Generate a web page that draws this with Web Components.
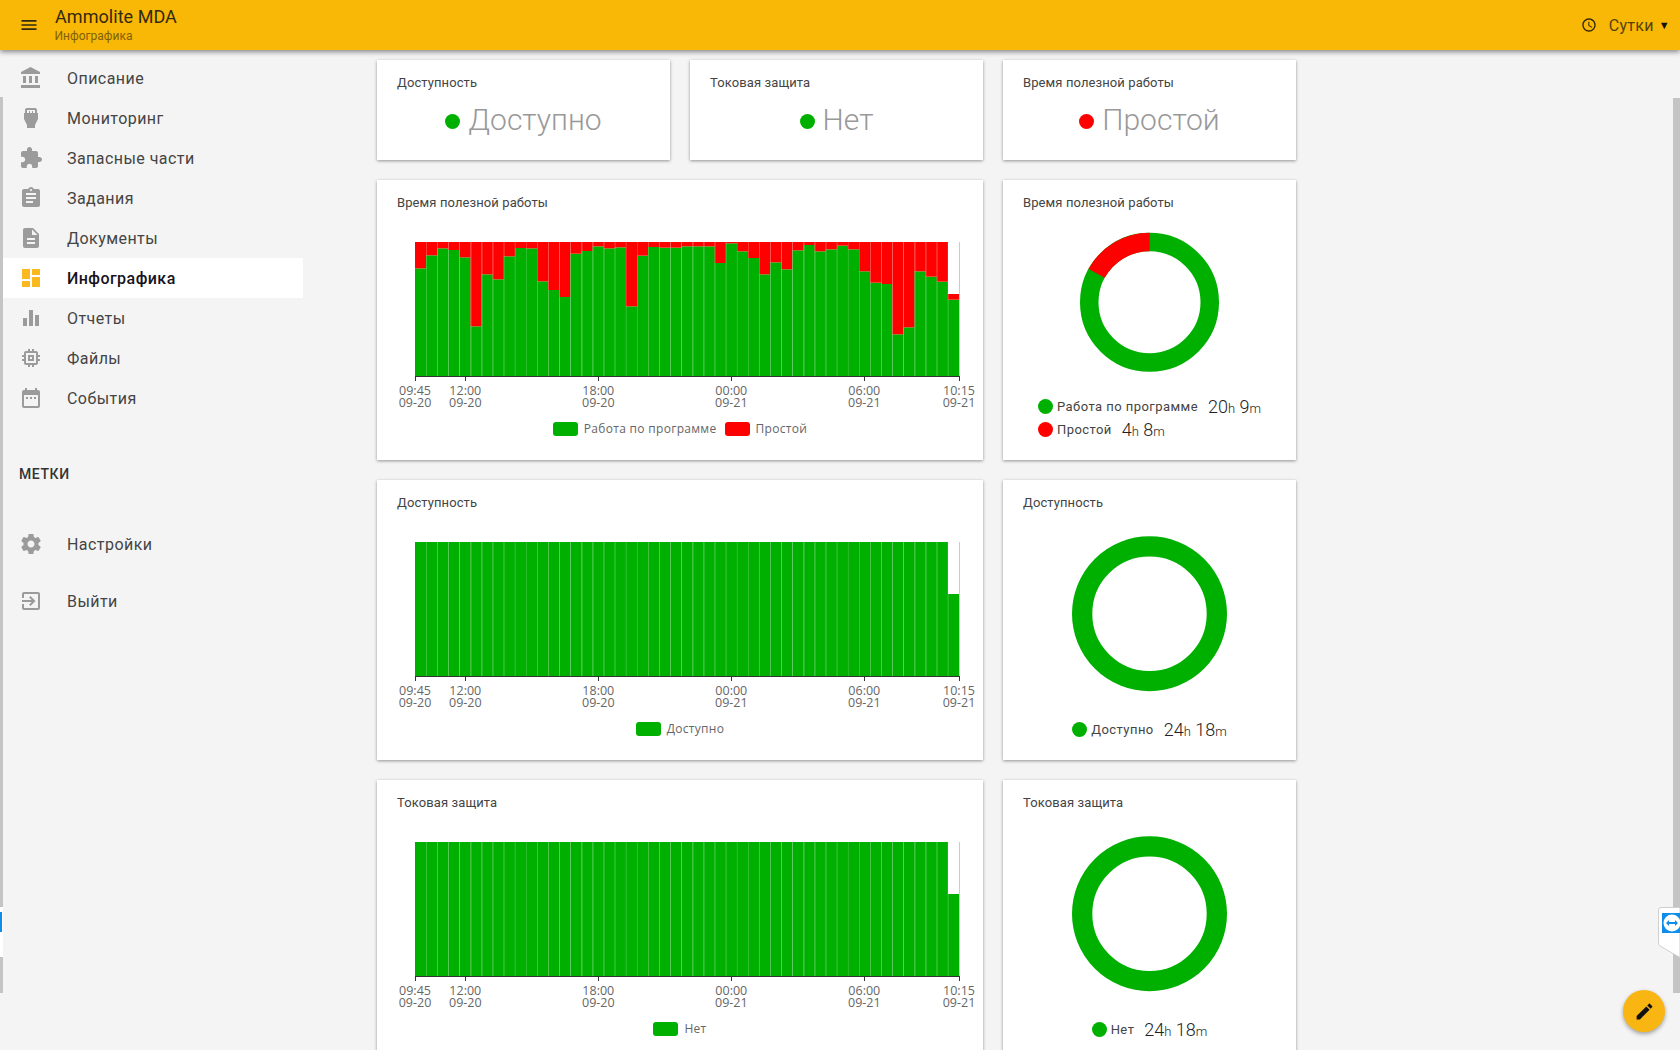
<!DOCTYPE html>
<html lang="ru">
<head>
<meta charset="utf-8">
<title>Ammolite MDA</title>
<style>
  html, body { margin: 0; height: 100%; overflow: hidden; background: #f4f4f4; font-family: Roboto, "Liberation Sans", sans-serif; }
</style>
</head>
<body>
<am-app></am-app>

<script>
const ICONS = {
  menu: 'M3 18h18v-2H3v2zm0-5h18v-2H3v2zm0-7v2h18V6H3z',
  clock: 'M11.99 2C6.47 2 2 6.48 2 12s4.47 10 9.99 10C17.52 22 22 17.52 22 12S17.52 2 11.99 2zM12 20c-4.42 0-8-3.58-8-8s3.58-8 8-8 8 3.58 8 8-3.58 8-8 8zm.5-13H11v6l5.25 3.15.75-1.23-4.5-2.67z',
  bank: 'M4 10v7h3v-7H4zm6 0v7h3v-7h-3zM2 22h19v-3H2v3zm14-12v7h3v-7h-3zm-4.5-9L2 6v2h19V6l-9.5-5z',
  hdmi: 'M18 7V4c0-1.1-.9-2-2-2H8c-1.1 0-2 .9-2 2v3H5v6l3 6v3h8v-3l3-6V7h-1zM8 4h8v3h-2.01V5h-1v2H11V5h-1v2H8V4z',
  puzzle: 'M20.5 11H19V7c0-1.1-.9-2-2-2h-4V3.5C13 2.12 11.88 1 10.5 1S8 2.12 8 3.5V5H4c-1.1 0-1.99.9-1.99 2v3.8H3.5c1.49 0 2.7 1.21 2.7 2.7s-1.21 2.7-2.7 2.7H2V20c0 1.1.9 2 2 2h3.8v-1.5c0-1.49 1.21-2.7 2.7-2.7 1.49 0 2.7 1.21 2.7 2.7V22H17c1.1 0 2-.9 2-2v-4h1.5c1.38 0 2.5-1.12 2.5-2.5S21.88 11 20.5 11z',
  assignment: 'M19 3h-4.18C14.4 1.84 13.3 1 12 1c-1.3 0-2.4.84-2.82 2H5c-1.1 0-2 .9-2 2v14c0 1.1.9 2 2 2h14c1.1 0 2-.9 2-2V5c0-1.1-.9-2-2-2zm-7 0c.55 0 1 .45 1 1s-.45 1-1 1-1-.45-1-1 .45-1 1-1zm2 14H7v-2h7v2zm3-4H7v-2h10v2zm0-4H7V7h10v2z',
  doc: 'M14 2H6c-1.1 0-1.99.9-1.99 2L4 20c0 1.1.89 2 1.99 2H18c1.1 0 2-.9 2-2V8l-6-6zm2 16H8v-2h8v2zm0-4H8v-2h8v2zm-3-5V3.5L18.5 9H13z',
  dashboard: 'M3 13h8V3H3v10zm0 8h8v-6H3v6zm10 0h8V11h-8v10zm0-18v6h8V3h-8z',
  bars: 'M10 20h4V4h-4v16zm-6 0h4v-8H4v8zM16 9v11h4V9h-4z',
  chip: 'M15 9H9v6h6V9zm-2 4h-2v-2h2v2zm8-2V9h-2V7c0-1.1-.9-2-2-2h-2V3h-2v2h-2V3H9v2H7c-1.1 0-2 .9-2 2v2H3v2h2v2H3v2h2v2c0 1.1.9 2 2 2h2v2h2v-2h2v2h2v-2h2c1.1 0 2-.9 2-2v-2h2v-2h-2v-2h2zm-4 6H7V7h10v10z',
  calendar: 'M9 11H7v2h2v-2zm4 0h-2v2h2v-2zm4 0h-2v2h2v-2zm2-7h-1V2h-2v2H8V2H6v2H5c-1.11 0-1.99.9-1.99 2L3 20c0 1.1.89 2 2 2h14c1.1 0 2-.9 2-2V6c0-1.1-.9-2-2-2zm0 16H5V9h14v11z',
  gear: 'M19.43 12.98c.04-.32.07-.64.07-.98s-.03-.66-.07-.98l2.11-1.65c.19-.15.24-.42.12-.64l-2-3.46c-.12-.22-.39-.3-.61-.22l-2.49 1c-.52-.4-1.08-.73-1.69-.98l-.38-2.65C14.46 2.18 14.25 2 14 2h-4c-.25 0-.46.18-.49.42l-.38 2.65c-.61.25-1.17.59-1.69.98l-2.49-1c-.23-.09-.49 0-.61.22l-2 3.46c-.13.22-.07.49.12.64l2.11 1.65c-.04.32-.07.65-.07.98s.03.66.07.98l-2.11 1.65c-.19.15-.24.42-.12.64l2 3.46c.12.22.39.3.61.22l2.49-1c.52.4 1.08.73 1.69.98l.38 2.65c.03.24.24.42.49.42h4c.25 0 .46-.18.49-.42l.38-2.65c.61-.25 1.17-.59 1.69-.98l2.49 1c.23.09.49 0 .61-.22l2-3.46c.12-.22.07-.49-.12-.64l-2.11-1.65zM12 15.5c-1.93 0-3.5-1.57-3.5-3.5s1.57-3.5 3.5-3.5 3.5 1.57 3.5 3.5-1.57 3.5-3.5 3.5z',
  exit: 'M10.09 15.59L11.5 17l5-5-5-5-1.41 1.41L12.67 11H3v2h9.67l-2.58 2.59zM19 3H5c-1.11 0-2 .9-2 2v4h2V5h14v14H5v-4H3v4c0 1.1.89 2 2 2h14c1.1 0 2-.9 2-2V5c0-1.1-.9-2-2-2z',
  edit: 'M3 17.25V21h3.75L17.81 9.94l-3.75-3.75L3 17.25zM20.71 7.04c.39-.39.39-1.02 0-1.41l-2.34-2.34c-.39-.39-1.02-.39-1.41 0l-1.83 1.83 3.75 3.75 1.83-1.83z'
};

const GREEN = '#00b000';
const RED = '#ff0000';

class AmIcon extends HTMLElement {
  connectedCallback() {
    const size = this.getAttribute('size') || 24;
    this.attachShadow({ mode: 'open' }).innerHTML = `
      <style>:host { display: inline-flex; flex: none; } svg { display: block; fill: currentColor; }</style>
      <svg width="${size}" height="${size}" viewBox="0 0 24 24"><path d="${ICONS[this.getAttribute('name')]}"/></svg>`;
  }
}
customElements.define('am-icon', AmIcon);

const headerTemplate = document.createElement('template');
headerTemplate.innerHTML = `
  <style>
    :host { display: flex; align-items: center; height: 50px; flex: none; position: relative; z-index: 2; background: #f9b706; box-shadow: 0 2px 5px rgba(0,0,0,.45); color: #332a10; padding: 0 10px 0 19px; box-sizing: border-box; }
    .titles { margin-left: 16px; flex: 1; }
    .app { font-size: 18px; line-height: 20px; margin-top: -1px; letter-spacing: .05px; }
    .sub { font-size: 12px; line-height: 14px; color: #7f6208; margin-top: 2px; margin-left: -.5px; }
    .period { display: flex; align-items: center; color: #55420c; font-size: 16px; letter-spacing: .3px; }
    .period am-icon { color: #2e2608; margin-right: 12px; }
    .arrow { font-size: 11px; margin-left: 5px; color: #111; }
  </style>
  <am-icon name="menu" size="20"></am-icon>
  <div class="titles">
    <div class="app">Ammolite MDA</div>
    <div class="sub">Инфографика</div>
  </div>
  <div class="period"><am-icon name="clock" size="16"></am-icon>Сутки<span class="arrow">▼</span></div>`;

class AmHeader extends HTMLElement {
  constructor() {
    super();
    this.attachShadow({ mode: 'open' }).appendChild(headerTemplate.content.cloneNode(true));
  }
}
customElements.define('am-header', AmHeader);

const navItemTemplate = document.createElement('template');
navItemTemplate.innerHTML = `
  <style>
    :host { display: flex; align-items: center; height: 40px; width: 300px; margin-left: 3px; padding-left: 16px; box-sizing: border-box; color: #444; font-size: 16px; letter-spacing: .45px; }
    :host([active]) { background: #fff; color: #17131c; font-weight: 500; }
    am-icon { color: #9b9b9b; margin-right: 24px; }
    :host([active]) am-icon { color: #fab91e; }
  </style>
  <am-icon></am-icon><slot></slot>`;

class AmNavItem extends HTMLElement {
  constructor() {
    super();
    const content = navItemTemplate.content.cloneNode(true);
    // icon name has to be on it before it goes in, the icon renders on connect
    content.querySelector('am-icon').setAttribute('name', this.getAttribute('icon'));
    this.attachShadow({ mode: 'open' }).appendChild(content);
  }
}
customElements.define('am-nav-item', AmNavItem);

class AmNav extends HTMLElement {
  constructor() {
    super();
    this.attachShadow({ mode: 'open' }).innerHTML = `
      <style>
        :host { display: block; width: 377px; flex: none; padding-top: 8px; box-sizing: border-box; }
        .label { margin: 46px 0 0 19px; font-size: 14px; line-height: 20px; font-weight: 500; letter-spacing: .6px; color: #333; }
        .s1 { margin-top: 40px; }
        .s2 { margin-top: 17px; }
      </style>
      <am-nav-item icon="bank">Описание</am-nav-item>
      <am-nav-item icon="hdmi">Мониторинг</am-nav-item>
      <am-nav-item icon="puzzle">Запасные части</am-nav-item>
      <am-nav-item icon="assignment">Задания</am-nav-item>
      <am-nav-item icon="doc">Документы</am-nav-item>
      <am-nav-item icon="dashboard" active>Инфографика</am-nav-item>
      <am-nav-item icon="bars">Отчеты</am-nav-item>
      <am-nav-item icon="chip">Файлы</am-nav-item>
      <am-nav-item icon="calendar">События</am-nav-item>
      <div class="label">МЕТКИ</div>
      <am-nav-item class="s1" icon="gear">Настройки</am-nav-item>
      <am-nav-item class="s2" icon="exit">Выйти</am-nav-item>`;
  }
}
customElements.define('am-nav', AmNav);

const cardTemplate = document.createElement('template');
cardTemplate.innerHTML = `
  <style>
    :host { display: block; background: #fff; box-shadow: 0 1px 3px rgba(0,0,0,.4); box-sizing: border-box; overflow: hidden; }
    h3 { margin: 0; padding: 15px 20px 0; font-size: 13px; line-height: 15px; font-weight: 400; letter-spacing: .1px; color: #444; }
  </style>
  <h3></h3>
  <slot></slot>`;

class AmCard extends HTMLElement {
  constructor() {
    super();
    const content = cardTemplate.content.cloneNode(true);
    content.querySelector('h3').textContent = this.getAttribute('title');
    this.removeAttribute('title');
    this.attachShadow({ mode: 'open' }).appendChild(content);
  }
}
customElements.define('am-card', AmCard);

class AmStatus extends HTMLElement {
  constructor() {
    super();
    const color = this.getAttribute('color') || GREEN;
    this.attachShadow({ mode: 'open' }).innerHTML = `
      <style>
        :host { display: flex; align-items: center; justify-content: center; gap: 8px; margin-top: 7px; height: 44px; font-size: 30px; font-weight: 300; color: #999; }
        i { width: 15px; height: 15px; border-radius: 50%; background: ${color}; margin-top: 4px; }
      </style>
      <i></i><slot></slot>`;
  }
}
customElements.define('am-status', AmStatus);

// stacked bars, drawn by hand. values are px from bottom of plot
const PLOT_H = 134;
const TICKS = [[38, '09:45', '09-20'], [88.3, '12:00', '09-20'], [221.3, '18:00', '09-20'], [354.3, '00:00', '09-21'], [487.3, '06:00', '09-21'], [582, '10:15', '09-21']];

class AmBars extends HTMLElement {
  constructor() {
    super();
    this.attachShadow({ mode: 'open' });
  }
  set data(val) {
    this._data = val;
    this.render();
  }
  render() {
    const x0 = 38, y0 = 17, w = 544 / 49;
    const base = y0 + PLOT_H;
    let rects = '', lines = '';
    this._data.bars.forEach((b, i) => {
      const x = x0 + i * w;
      const top = base - b[0];
      rects += `<rect x="${x}" y="${top}" width="${w}" height="${b[0]}" fill="${GREEN}"/>`;
      if (b[1]) rects += `<rect x="${x}" y="${top - b[1]}" width="${w}" height="${b[1]}" fill="${RED}"/>`;
      if (i) {
        const lx = Math.round(x) + .5;
        lines += `<line x1="${lx}" x2="${lx}" y1="${y0}" y2="${base}" stroke="rgba(255,255,255,.15)"/>`;
      }
    });
    let ticks = '';
    TICKS.forEach(t => {
      const tx = Math.round(t[0]) + .5;
      ticks += `<line x1="${tx}" x2="${tx}" y1="${base}" y2="${base + 5}" stroke="#333"/>
        <text x="${t[0]}" y="${base + 18.5}">${t[1]}</text><text x="${t[0]}" y="${base + 30.5}">${t[2]}</text>`;
    });
    const legend = this._data.legend.map(l => `<span class="it"><i style="background:${l[1]}"></i>${l[0]}</span>`).join('');
    this.shadowRoot.innerHTML = `
      <style>
        :host { display: block; }
        svg { display: block; margin-top: 15px; }
        text { font: 12.5px "Open Sans", sans-serif; fill: #666; text-anchor: middle; }
        .legend { display: flex; justify-content: center; gap: 8px; margin-top: 7px; font: 12px/14px "Open Sans", sans-serif; letter-spacing: .3px; color: #666; }
        .it { display: flex; align-items: center; }
        i { width: 25px; height: 14px; border-radius: 3px; margin-right: 6px; }
      </style>
      <svg width="606" height="190">${rects}${lines}
        <line x1="582.5" x2="582.5" y1="${y0}" y2="${base}" stroke="#ccc"/>
        <line x1="38" x2="583" y1="${base + .5}" y2="${base + .5}" stroke="#333"/>
        ${ticks}
      </svg>
      <div class="legend">${legend}</div>`;
  }
}
customElements.define('am-bars', AmBars);

class AmDonut extends HTMLElement {
  constructor() {
    super();
    this.attachShadow({ mode: 'open' });
  }
  set data(val) {
    const r1 = val.r, r2 = val.inner, cy = val.cy;
    const mid = (r1 + r2) / 2;
    const c = 2 * Math.PI * mid;
    let red = '';
    if (val.part) {
      const len = c * val.part;
      red = `<circle cx="146.5" cy="${cy}" r="${mid}" fill="none" stroke="${RED}" stroke-width="${r1 - r2}" stroke-dasharray="${len} ${c - len}" transform="rotate(${-90 - 360 * val.part} 146.5 ${cy})"/>`;
    }
    const rows = val.rows.map(r => `<div class="row"><i style="background:${r[1]}"></i><span class="name">${r[0]}</span><span class="val">${r[2]}<small>h</small> ${r[3]}<small>m</small></span></div>`).join('');
    this.shadowRoot.innerHTML = `
      <style>
        :host { display: block; }
        svg { display: block; }
        .legend { display: flex; flex-direction: column; align-items: center; }
        .wrap { display: flex; flex-direction: column; }
        .row { display: flex; align-items: center; height: 23px; font-size: 13px; letter-spacing: .45px; color: #444; }
        i { width: 15px; height: 15px; border-radius: 50%; margin-right: 4px; }
        .val { font-size: 18px; font-weight: 300; margin-left: 10px; color: #222; letter-spacing: 0; }
        small { font-size: 13px; }
      </style>
      <svg width="293" height="${val.h}">
        <circle cx="146.5" cy="${cy}" r="${mid}" fill="none" stroke="${GREEN}" stroke-width="${r1 - r2}"/>
        ${red}
      </svg>
      <div class="legend"><div class="wrap">${rows}</div></div>`;
  }
}
customElements.define('am-donut', AmDonut);

const appTemplate = document.createElement('template');
appTemplate.innerHTML = `
  <style>
    :host { display: flex; flex-direction: column; height: 100vh; overflow: hidden; position: relative; }
    .body { display: flex; flex: 1; min-height: 0; }
    .grid { display: grid; grid-template-columns: repeat(3, 293px); grid-template-rows: 100px; grid-auto-rows: 280px; gap: 20px; padding-top: 10px; }
    .wide { grid-column: span 2; }
    .bar-l, .bar-r { position: absolute; background: #c4c4c4; z-index: 1; }
    .bar-l { left: 0; top: 97px; width: 3px; height: 896px; }
    .bar-r { right: 0; top: 98px; width: 7px; height: 895px; }
    .tv-l { position: absolute; left: 0; top: 907px; width: 3px; height: 50px; background: #fff; z-index: 1; }
    .tv-l b { display: block; padding-top: 20px; margin-top: 5px; width: 2px; background: #0e8ee9; }
    .tv-r { position: absolute; right: 0; top: 907px; z-index: 1; display: block; }
    .fab { position: absolute; left: 1623px; top: 990px; width: 42px; height: 42px; border-radius: 50%; background: #f9b512; box-shadow: 0 2px 4px rgba(0,0,0,.35); display: flex; align-items: center; justify-content: center; color: #111; z-index: 3; }
  </style>
  <am-header></am-header>
  <div class="body">
    <am-nav></am-nav>
    <div class="grid">
      <am-card title="Доступность"><am-status>Доступно</am-status></am-card>
      <am-card title="Токовая защита"><am-status>Нет</am-status></am-card>
      <am-card title="Время полезной работы"><am-status color="#ff0000">Простой</am-status></am-card>
      <am-card class="wide" title="Время полезной работы"><am-bars id="b1"></am-bars></am-card>
      <am-card title="Время полезной работы"><am-donut id="d1"></am-donut></am-card>
      <am-card class="wide" title="Доступность"><am-bars id="b2"></am-bars></am-card>
      <am-card title="Доступность"><am-donut id="d2"></am-donut></am-card>
      <am-card class="wide" title="Токовая защита"><am-bars id="b3"></am-bars></am-card>
      <am-card title="Токовая защита"><am-donut id="d3"></am-donut></am-card>
    </div>
  </div>
  <div class="bar-l"></div>
  <div class="bar-r"></div>
  <div class="tv-l"><b></b></div>
  <svg class="tv-r" width="22" height="51" viewBox="0 0 22 51">
    <path d="M22 50.5 L2 39 Q.5 38 .5 36 L.5 3 Q.5 .5 3 .5 L22 .5 Z" fill="#fff" stroke="#cfcfcf"/>
    <rect x="4" y="6" width="18" height="20" fill="#0e8ee9"/>
    <circle cx="14" cy="16" r="8.5" fill="#fff"/>
    <path d="M8 16 l3-3 v2 h6 v-2 l3 3 -3 3 v-2 h-6 v2 z" fill="#0e8ee9"/>
  </svg>
  <div class="fab"><am-icon name="edit" size="21"></am-icon></div>`;

// green top as read off the reference, plot top = 216, bottom = 618 at 3x
const TOPS = [295,256,235,240,262,469,313,328,259,234,235,334,360,381,251,243,229,235,232,409,257,231,233,233,229,229,229,279,220,244,264,313,277,298,241,225,244,238,227,238,304,338,342,493,472,304,320,335];

class AmApp extends HTMLElement {
  constructor() {
    super();
    this.attachShadow({ mode: 'open' }).appendChild(appTemplate.content.cloneNode(true));
  }
  connectedCallback() {
    const $ = id => this.shadowRoot.getElementById(id);
    const work = TOPS.map(t => [(618 - t) / 3, (t - 216) / 3]);
    work.push([(618 - 389) / 3, (389 - 372) / 3]);
    const full = Array.from({ length: 48 }, () => [PLOT_H, 0]);
    full.push([82, 0]);

    $('b1').data = { bars: work, legend: [['Работа по программе', GREEN], ['Простой', RED]] };
    $('b2').data = { bars: full, legend: [['Доступно', GREEN]] };
    $('b3').data = { bars: full, legend: [['Нет', GREEN]] };

    $('d1').data = { r: 69.5, inner: 51, cy: 92.3, h: 185, part: .1705, rows: [['Работа по программе', GREEN, 20, 9], ['Простой', RED, 4, 8]] };
    $('d2').data = { r: 77.5, inner: 57.2, cy: 103.7, h: 207.5, rows: [['Доступно', GREEN, 24, 18]] };
    $('d3').data = { r: 77.5, inner: 57.2, cy: 103.7, h: 207.5, rows: [['Нет', GREEN, 24, 18]] };
  }
}
customElements.define('am-app', AmApp);
</script>
</body>
</html>
